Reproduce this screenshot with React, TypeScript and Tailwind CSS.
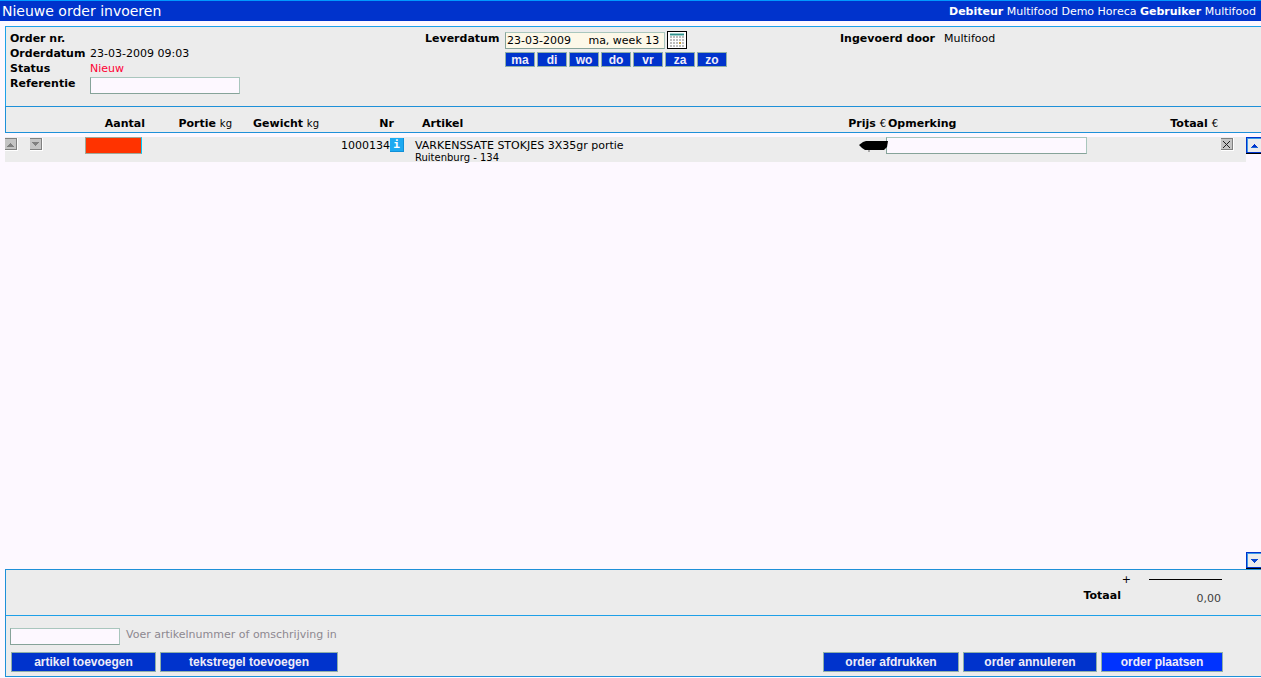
import React, { useState } from 'react';

const days = ['ma', 'di', 'wo', 'do', 'vr', 'za', 'zo'];

const fieldClass =
  'block border border-t-[#a9c6bd] border-r-[#a9c6bd] border-b-[#86a399] border-l-[#86a399] bg-[#fdf8ff] outline-none';

function ActionButton({ label, className }: { label: string; className: string }) {
  return (
    <button
      type="button"
      className={`h-5 border border-[#8fb0a8] font-['Liberation_Sans',Arial,sans-serif] text-[12px] leading-4 font-bold text-[#f0ecf8] whitespace-nowrap ${className}`}
    >
      {label}
    </button>
  );
}

function MoveButton({ direction }: { direction: 'up' | 'down' }) {
  return (
    <button type="button" aria-label={direction === 'up' ? 'Omhoog' : 'Omlaag'} className="block">
      <svg width="13" height="13" shapeRendering="crispEdges">
        <rect width="13" height="13" fill="#ffffff" />
        <rect width="12" height="12" fill="#808080" />
        <rect y="1" width="11" height="10" fill="#c4c4c4" />
        {direction === 'up' ? (
          <path d="M5 5h1v1h1v1h1v1h1v1H2V8h1V7h1V6h1z" fill="#808080" />
        ) : (
          <path d="M2 4h7v1H8v1H7v1H6v1H5V7H4V6H3V5H2z" fill="#808080" />
        )}
      </svg>
    </button>
  );
}

function ScrollButton({ direction }: { direction: 'up' | 'down' }) {
  return (
    <button type="button" aria-label={direction === 'up' ? 'Scroll omhoog' : 'Scroll omlaag'} className="block">
      <svg width="15" height="17" shapeRendering="crispEdges">
        <rect width="15" height="17" fill="#0033cc" />
        <rect x="1" y="1" width="14" height="14" fill="#3a9ae8" />
        <rect x="2" y="2" width="13" height="13" fill="#ececec" />
        <rect y="16" width="15" height="1" fill="#000000" />
        {direction === 'up' ? (
          <>
            <path d="M8 7h1v1h1v1h1v1H6V9h1V8h1z" fill="#0033cc" />
            <path d="M5 10h7v1H5z" fill="#1e66d8" />
          </>
        ) : (
          <path d="M5 7h7v1h-1v1h-1v1H9v1H8v-1H7V9H6V8H5z" fill="#0a48d0" />
        )}
      </svg>
    </button>
  );
}

function CalendarIcon() {
  const rows = [5, 8, 11, 14];
  const cols = [3, 6, 9, 12, 15];
  return (
    <svg width="20" height="18" shapeRendering="crispEdges">
      <rect width="20" height="18" fill="#000000" />
      <rect x="1" y="1" width="18" height="16" fill="#fdfdfd" />
      <rect x="3" y="2" width="14" height="1" fill="#9fd0cc" />
      <rect x="3" y="3" width="14" height="1" fill="#2f8f8c" />
      <rect x="3" y="4" width="14" height="1" fill="#9fd0cc" />
      {rows.map(y =>
        cols.map(x => (
          <rect key={`${x}-${y}`} x={x} y={y} width="2" height="2" fill={x === 12 && y === 11 ? '#c8a040' : '#bdbdbd'} />
        ))
      )}
    </svg>
  );
}

function TitleBar() {
  return (
    <header className="flex h-[21px] items-center justify-between border-t border-[#0099ff] bg-[#0033cc] pl-0.5 text-white">
      <h1 className="text-[14px] leading-4 whitespace-nowrap">Nieuwe order invoeren</h1>
      <p className="w-[312px] overflow-hidden whitespace-nowrap">
        <b>Debiteur</b> Multifood Demo Horeca <b>Gebruiker</b> Multifood
      </p>
    </header>
  );
}

function OrderInfo() {
  const [reference, setReference] = useState('');
  const [date, setDate] = useState('23-03-2009     ma, week 13');

  return (
    <section className="ml-[5px] mt-[5px] grid h-20 grid-cols-3 border-t border-l border-[#1ea0e8] bg-[#ececec] pt-1 pr-1.5 pl-1">
      <dl className="grid grid-cols-[80px_1fr] content-start">
        <dt className="font-bold">Order nr.</dt>
        <dd />
        <dt className="font-bold">Orderdatum</dt>
        <dd>23-03-2009 09:03</dd>
        <dt className="font-bold">Status</dt>
        <dd className="text-[#ff0033]">Nieuw</dd>
        <dt className="font-bold">
          <label htmlFor="referentie">Referentie</label>
        </dt>
        <dd className="pt-px">
          <input
            id="referentie"
            value={reference}
            onChange={e => setReference(e.target.value)}
            className={`h-[17px] w-[150px] px-px ${fieldClass}`}
          />
        </dd>
      </dl>

      <div className="flex">
        <label htmlFor="leverdatum" className="w-20 font-bold">
          Leverdatum
        </label>
        <div>
          <div className="flex items-end gap-0.5">
            <input
              id="leverdatum"
              value={date}
              onChange={e => setDate(e.target.value)}
              className="block h-[17px] w-40 border border-t-[#a9c6bd] border-r-[#a9c6bd] border-b-[#86a399] border-l-[#86a399] bg-[#fdf8e8] px-px outline-none"
            />
            <button type="button" aria-label="Kalender">
              <CalendarIcon />
            </button>
          </div>
          <div className="mt-[3px] flex gap-0.5">
            {days.map(day => (
              <button
                key={day}
                type="button"
                className="h-[15px] w-[30px] border border-[#8fb0a8] bg-[#0033cc] font-['Liberation_Sans',Arial,sans-serif] text-[12px] leading-3 font-bold text-[#f0ecf8]"
              >
                {day}
              </button>
            ))}
          </div>
        </div>
      </div>

      <dl className="flex">
        <dt className="w-[104px] font-bold whitespace-nowrap">Ingevoerd door</dt>
        <dd>Multifood</dd>
      </dl>
    </section>
  );
}

function Unit({ children }: { children: React.ReactNode }) {
  return <span className="text-[10px] font-normal">{children}</span>;
}

function OrderLines() {
  const [amount, setAmount] = useState('');
  const [remark, setRemark] = useState('');
  const head = 'border-y border-[#1e90d8] pt-2 text-right whitespace-nowrap';

  return (
    <section className="relative ml-[5px] flex-1">
      <table className="w-full table-fixed border-separate border-spacing-0">
        <colgroup>
          <col className="w-20" />
          <col className="w-[62px]" />
          <col className="w-[87px]" />
          <col className="w-[87px]" />
          <col className="w-[83px]" />
          <col />
          <col className="w-[60px]" />
          <col className="w-[201px]" />
          <col className="w-[134px]" />
          <col className="w-[25px]" />
          <col className="w-[15px]" />
        </colgroup>
        <thead className="bg-[#ececec]">
          <tr className="h-[27px]">
            <th className={`border-l ${head}`} />
            <th className={`pr-0.5 ${head}`}>Aantal</th>
            <th className={`pr-0.5 ${head}`}>Portie <Unit>kg</Unit></th>
            <th className={`pr-0.5 ${head}`}>Gewicht <Unit>kg</Unit></th>
            <th className={`pr-2.5 ${head}`}>Nr</th>
            <th className="border-y border-[#1e90d8] pt-2 pl-[18px] text-left">Artikel</th>
            <th className={head}>Prijs <Unit>€</Unit></th>
            <th className="border-y border-[#1e90d8] pt-2 pl-0.5 text-left">Opmerking</th>
            <th className={`pr-[3px] ${head}`}>Totaal <Unit>€</Unit></th>
            <th className={head} />
            <th className={head} />
          </tr>
        </thead>
        <tbody className="[&_td]:border-t-4 [&_td]:border-[#fdf8ff] [&_td]:align-top">
          <tr className="h-[29px] bg-[#ececec]">
            <td>
              <div className="flex gap-3 pt-px">
                <MoveButton direction="up" />
                <MoveButton direction="down" />
              </div>
            </td>
            <td>
              <input
                aria-label="Aantal"
                value={amount}
                onChange={e => setAmount(e.target.value)}
                className="block h-[17px] w-[57px] border border-[#a0a898] border-r-[#00ccff] bg-[#ff3300] px-px text-right outline-none"
              />
            </td>
            <td />
            <td />
            <td>
              <div className="flex items-start justify-end pt-px">
                <span>1000134</span>
                <button
                  type="button"
                  aria-label="Artikelinformatie"
                  className="h-3.5 w-3.5 border-r border-b border-[#1090d8] bg-[#1eaaf1] font-['DejaVu_Sans_Mono',monospace] text-[11px] leading-3 font-bold text-white"
                >
                  i
                </button>
              </div>
            </td>
            <td className="pl-[11px]">
              <div className="pt-px leading-[15px]">VARKENSSATE STOKJES 3X35gr portie</div>
              <div className="text-[10px] leading-[9px]">Ruitenburg - 134</div>
            </td>
            <td>
              <svg width="29" height="10" className="relative mt-1 ml-[33px] overflow-visible">
                <path d="M0 4 4 1 7 0h22l-1 6-3 3H6L3 7z" fill="#000000" />
                <path d="M10 9v2" stroke="#666666" />
              </svg>
            </td>
            <td>
              <input
                aria-label="Opmerking"
                value={remark}
                onChange={e => setRemark(e.target.value)}
                className={`h-[17px] w-full px-px ${fieldClass}`}
              />
            </td>
            <td />
            <td>
              <button type="button" aria-label="Regel verwijderen" className="block pt-px">
                <svg width="13" height="13" shapeRendering="crispEdges">
                  <rect width="13" height="13" fill="#ffffff" />
                  <rect width="12" height="12" fill="#808080" />
                  <rect y="1" width="11" height="10" fill="#c4c4c4" />
                  <path d="m2 3 7 7M9 3 2 10" stroke="#202020" />
                </svg>
              </button>
            </td>
            <td className="bg-[#fdf8ff]" />
          </tr>
        </tbody>
      </table>
      <div className="absolute top-[31px] right-0 bottom-0 flex flex-col justify-between">
        <ScrollButton direction="up" />
        <ScrollButton direction="down" />
      </div>
    </section>
  );
}

function OrderFooter() {
  const [query, setQuery] = useState('');

  return (
    <footer className="mb-px ml-[5px] border-y border-l border-[#1e90d8] bg-[#ececec]">
      <div className="flex h-[46px] justify-end border-b border-[#1ea0e8] pr-[39px]">
        <div className="w-[60px] pt-0.5 text-right">
          <div className="-mr-2.5">+</div>
          <div className="pt-px font-bold">Totaal</div>
        </div>
        <div className="ml-7 w-[73px] pt-[9px]">
          <div className="border-t border-black pt-[11px] pr-px text-right text-[#404040]">0,00</div>
        </div>
      </div>
      <div className="pt-3 pr-[38px] pb-1 pl-1">
        <div className="flex gap-1.5">
          <input
            id="artikel"
            value={query}
            onChange={e => setQuery(e.target.value)}
            className={`h-[17px] w-[110px] px-px ${fieldClass}`}
          />
          <label htmlFor="artikel" className="leading-[13px] text-[#8c8890]">
            Voer artikelnummer of omschrijving in
          </label>
        </div>
        <div className="mt-[7px] ml-px flex gap-1">
          <ActionButton label="artikel toevoegen" className="w-[145px] bg-[#0033cc]" />
          <ActionButton label="tekstregel toevoegen" className="w-[178px] bg-[#0033cc]" />
          <ActionButton label="order afdrukken" className="ml-auto w-[136px] bg-[#0033cc]" />
          <ActionButton label="order annuleren" className="w-[134px] bg-[#0033cc]" />
          <ActionButton label="order plaatsen" className="w-[122px] bg-[#0033ff]" />
        </div>
      </div>
    </footer>
  );
}

export default function App() {
  return (
    <div className="flex min-h-screen flex-col bg-[#fdf8ff] font-[Verdana,'DejaVu_Sans',sans-serif] text-[11px] leading-[15px] text-black">
      <TitleBar />
      <OrderInfo />
      <OrderLines />
      <OrderFooter />
    </div>
  );
}
